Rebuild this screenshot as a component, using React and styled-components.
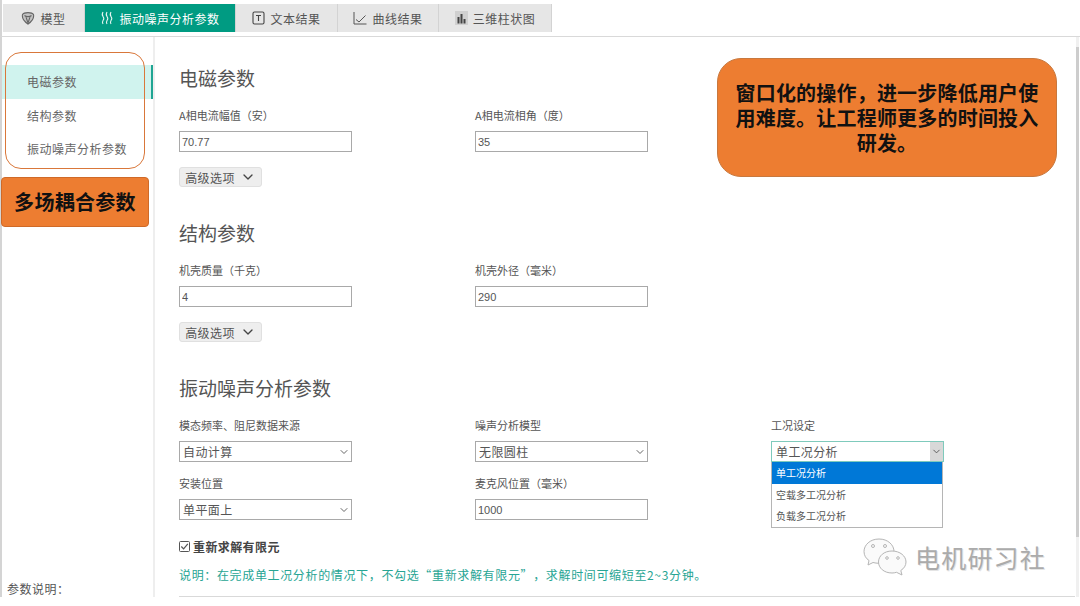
import React from 'react';
import styled, { createGlobalStyle } from 'styled-components';
import { LuChevronDown } from 'react-icons/lu';

const App = () => {
    return <Page>
        <GlobalStyle />
        <TabBar>
            <Tab $width={82} $first><ModelIcon />模型</Tab>
            <Tab $width={151} $active><WaveIcon />振动噪声分析参数</Tab>
            <Tab $width={102}><TextIcon />文本结果</Tab>
            <Tab $width={101}><CurveIcon />曲线结果</Tab>
            <Tab $width={113}><BarsIcon />三维柱状图</Tab>
        </TabBar>
        <Body>
            <Sidebar>
                <MenuFrame />
                <Menu>
                    <MenuItem $active>电磁参数</MenuItem>
                    <MenuItem>结构参数</MenuItem>
                    <MenuItem>振动噪声分析参数</MenuItem>
                </Menu>
                <OrangeTag>多场耦合参数</OrangeTag>
                <ParamNote>参数说明：</ParamNote>
            </Sidebar>
            <Main>
                <Callout>窗口化的操作，进一步降低用户使用难度。让工程师更多的时间投入研发。</Callout>
                <SectionTitle>电磁参数</SectionTitle>
                <FieldRow>
                    <Field label="A相电流幅值（安）"><TextInput readOnly value="70.77" /></Field>
                    <Field label="A相电流相角（度）"><TextInput readOnly value="35" /></Field>
                </FieldRow>
                <AdvancedButton>高级选项<LuChevronDown /></AdvancedButton>

                <SectionTitle>结构参数</SectionTitle>
                <FieldRow>
                    <Field label="机壳质量（千克）"><TextInput readOnly value="4" /></Field>
                    <Field label="机壳外径（毫米）"><TextInput readOnly value="290" /></Field>
                </FieldRow>
                <AdvancedButton>高级选项<LuChevronDown /></AdvancedButton>

                <SectionTitle>振动噪声分析参数</SectionTitle>
                <FieldRow>
                    <Field label="模态频率、阻尼数据来源"><SelectBox>自动计算<LuChevronDown /></SelectBox></Field>
                    <Field label="噪声分析模型"><SelectBox>无限圆柱<LuChevronDown /></SelectBox></Field>
                    <Field label="工况设定">
                        <DropdownWrap>
                            <SelectBox $open>单工况分析<ArrowButton><LuChevronDown /></ArrowButton></SelectBox>
                            <OptionList>
                                <Option $selected>单工况分析</Option>
                                <Option>空载多工况分析</Option>
                                <Option>负载多工况分析</Option>
                            </OptionList>
                        </DropdownWrap>
                    </Field>
                </FieldRow>
                <FieldRow $second>
                    <Field label="安装位置"><SelectBox>单平面上<LuChevronDown /></SelectBox></Field>
                    <Field label="麦克风位置（毫米）"><TextInput readOnly value="1000" /></Field>
                </FieldRow>
                <CheckRow><CheckIcon />重新求解有限元</CheckRow>
                <NoteText>说明：在完成单工况分析的情况下，不勾选“重新求解有限元”，求解时间可缩短至2~3分钟。</NoteText>
                <Divider />
                <Watermark><WechatIcon /><WatermarkText>电机研习社</WatermarkText></Watermark>
            </Main>
            <ScrollTrack><ScrollThumb /></ScrollTrack>
        </Body>
    </Page>
};

export default App;

const Field = ({ label, children }) => <div>
    <FieldLabel>{label}</FieldLabel>
    {children}
</div>;

const ModelIcon = () => <svg width="14" height="14" viewBox="0 0 14 14" fill="none" stroke="#666" strokeWidth="1.1">
    <path d="M1.5 3.5 C3 1 11 1 12.5 3.5 C13 6 11.5 10 7 13 C2.5 10 1 6 1.5 3.5 Z" fill="#c4c4c4" />
    <path d="M3.5 4.5 C5 6 9 6 10.5 4.5 M5 6 L7 12 L9 6" />
</svg>;

const WaveIcon = () => <svg width="14" height="14" viewBox="0 0 14 14" fill="none" stroke="#e4f5f1" strokeWidth="1.1">
    <path d="M3 1 C1.8 3 1.8 4 3 5.5 C4.2 7 4.2 8 3 9.5 C2 11 2.4 12 3 13" />
    <path d="M7 1 C5.8 3 5.8 4 7 5.5 C8.2 7 8.2 8 7 9.5 C6 11 6.4 12 7 13" />
    <path d="M11 1 C9.8 3 9.8 4 11 5.5 C12.2 7 12.2 8 11 9.5 C10 11 10.4 12 11 13" />
</svg>;

const TextIcon = () => <svg width="13" height="14" viewBox="0 0 13 14" fill="none" stroke="#444" strokeWidth="1.1">
    <rect x="1" y="1" width="11" height="12" rx="1.5" />
    <path d="M4 4.5 H9 M6.5 4.5 V10" />
</svg>;

const CurveIcon = () => <svg width="14" height="14" viewBox="0 0 14 14" fill="none" stroke="#555" strokeWidth="1">
    <path d="M1 1 V13 H13.5" />
    <path d="M3 8.5 L6 11 L12.5 4.5" />
</svg>;

const BarsIcon = () => <svg width="13" height="14" viewBox="0 0 13 14">
    <rect width="13" height="14" fill="#d0d0d0" />
    <rect x="2.5" y="6" width="2" height="6.5" fill="#444" />
    <rect x="5.5" y="3" width="2" height="9.5" fill="#444" />
    <rect x="8.5" y="8" width="2" height="4.5" fill="#444" />
</svg>;

const CheckIcon = () => <svg width="11" height="11" viewBox="0 0 11 11" fill="none" stroke="#555">
    <rect x="0.5" y="0.5" width="10" height="10" rx="1" />
    <path d="M2.3 5.5 L4.6 7.8 L8.8 2.8" strokeWidth="1.2" />
</svg>;

const WechatIcon = () => <svg width="44" height="38" viewBox="0 0 44 38" fill="#fafafa" stroke="#b5b5b5" strokeWidth="1">
    <path d="M16 1 C7 1 1 7 1 13.5 C1 17.5 3 20.5 6 22.5 L5 27 L10 24.5 C12 25 14 25.3 16 25.3 C25 25.3 31 19.5 31 13.5 C31 7 25 1 16 1 Z" />
    <path d="M29 13 C21 13 15.5 18 15.5 24 C15.5 30 21 35 29 35 C30.5 35 32 34.8 33.5 34.3 L39 37 L37.8 32.5 C41 30.5 43 27.5 43 24 C43 18 37 13 29 13 Z" />
    <circle cx="10" cy="8" r="1.5" />
    <circle cx="22" cy="8" r="1.5" />
    <circle cx="24" cy="20" r="1.3" />
    <circle cx="35" cy="20" r="1.3" />
</svg>;

const GlobalStyle = createGlobalStyle`
    html, body {
        margin: 0;
        padding: 0;
        background: #fff;
    }
    body {
        font-family: "Noto Sans CJK SC", "Noto Sans", sans-serif;
        color: #555;
    }
`;

const Page = styled.div`
    width: 1080px;
    height: 606px;
    overflow: hidden;
    position: relative;
    background: #fff;
`;

const TabBar = styled.div`
    display: flex;
    height: 37px;
    box-sizing: border-box;
    padding: 4px 0 0 1px;
    border-bottom: 1px solid #d9d9d9;
    border-left: 2px solid #d4d4d4;
`;

const Tab = styled.div`
    width: ${p => p.$width}px;
    height: 28px;
    box-sizing: border-box;
    display: flex;
    align-items: center;
    justify-content: center;
    gap: 5px;
    font-size: 12px;
    letter-spacing: 0.5px;
    color: ${p => p.$active ? '#fff' : '#555'};
    background: ${p => p.$active ? '#009b82' : '#e6e6e6'};
    border-right: 1px solid #d3d3d3;
`;

const Body = styled.div`
    display: flex;
    height: 560px;
    border-left: 2px solid #d4d4d4;
`;

const Sidebar = styled.div`
    width: 153px;
    flex-shrink: 0;
    box-sizing: border-box;
    position: relative;
    border-right: 2px solid #eee;
    padding-top: 28px;
    display: flex;
    flex-direction: column;
`;

const MenuFrame = styled.div`
    position: absolute;
    left: 3px;
    top: 15px;
    width: 138px;
    height: 115px;
    border: 1px solid #d9773a;
    border-radius: 16px;
    pointer-events: none;
`;

const Menu = styled.div`
    display: flex;
    flex-direction: column;
`;

const MenuItem = styled.div`
    height: 33.5px;
    box-sizing: border-box;
    display: flex;
    align-items: center;
    padding-left: 25px;
    font-size: 12px;
    letter-spacing: 0.5px;
    color: #666;
    background: ${p => p.$active ? '#d0f3ee' : 'transparent'};
    border-right: 2px solid ${p => p.$active ? '#1fa593' : 'transparent'};
`;

const OrangeTag = styled.div`
    width: 148px;
    height: 50px;
    margin: 11px 0 0 -1px;
    box-sizing: border-box;
    background: #ed7d31;
    border: 1px solid #cf6a28;
    border-radius: 4px;
    display: flex;
    align-items: center;
    justify-content: center;
    font-size: 20px;
    font-weight: 700;
    letter-spacing: 0.3px;
    color: #111;
`;

const ParamNote = styled.div`
    margin-top: auto;
    padding: 0 0 0 5px;
    font-size: 12px;
    line-height: 16px;
    letter-spacing: 0.5px;
    color: #555;
`;

const Main = styled.div`
    flex: 1;
    position: relative;
    box-sizing: border-box;
    padding: 27px 0 0 24px;
`;

const Callout = styled.div`
    position: absolute;
    left: 562px;
    top: 21px;
    width: 340px;
    height: 119px;
    box-sizing: border-box;
    padding: 0 17px;
    background: #ed7d31;
    border: 1px solid #c8783e;
    border-radius: 24px;
    display: flex;
    align-items: center;
    text-align: center;
    font-size: 20px;
    letter-spacing: 0.2px;
    line-height: 25px;
    font-weight: 700;
    color: #111;
`;

const SectionTitle = styled.h2`
    margin: 0;
    font-size: 19px;
    line-height: 28px;
    font-weight: 400;
    color: #555;
`;

const FieldRow = styled.div`
    display: grid;
    grid-template-columns: 173px 173px 173px;
    column-gap: 123px;
    margin-top: ${p => p.$second ? '13px' : '15px'};
`;

const FieldLabel = styled.div`
    font-size: 11px;
    line-height: 16px;
    margin-bottom: 8px;
    color: #555;
`;

const TextInput = styled.input`
    display: block;
    width: 173px;
    height: 21px;
    box-sizing: border-box;
    padding: 0 2px;
    border: 1px solid #a9a9a9;
    outline: none;
    border-radius: 0;
    font-family: "Liberation Sans", sans-serif;
    font-size: 11px;
    color: #555;
`;

const AdvancedButton = styled.div`
    width: 83px;
    height: 20px;
    margin: 15px 0 32px;
    box-sizing: border-box;
    display: flex;
    align-items: center;
    justify-content: center;
    gap: 5px;
    background: #eee;
    border: 1px solid #e0e0e0;
    border-radius: 3px;
    font-size: 12px;
    letter-spacing: 0.4px;
    color: #555;

    & svg {
        font-size: 16px;
        color: #444;
    }
`;

const SelectBox = styled.div`
    width: 173px;
    height: 21px;
    box-sizing: border-box;
    display: flex;
    align-items: center;
    justify-content: space-between;
    padding: ${p => p.$open ? '0 0 0 4px' : '0 0 0 3px'};
    border: 1px solid ${p => p.$open ? '#7fcabc' : '#a9a9a9'};
    font-size: 12px;
    letter-spacing: 0.4px;
    color: #555;

    & > svg {
        font-size: 12px;
        color: #666;
        margin-right: 1px;
    }
`;

const ArrowButton = styled.span`
    width: 13px;
    height: 19px;
    display: flex;
    align-items: center;
    justify-content: center;
    background: #d8d8d8;
    font-size: 11px;
    color: #555;
`;

const DropdownWrap = styled.div`
    position: relative;
`;

const OptionList = styled.div`
    position: absolute;
    top: 21px;
    left: 0;
    width: 172px;
    box-sizing: border-box;
    background: #fff;
    border: 1px solid #b5b5b5;
    border-top: none;
    z-index: 2;
`;

const Option = styled.div`
    height: 21.5px;
    padding-left: 4px;
    display: flex;
    align-items: center;
    font-size: 10px;
    color: ${p => p.$selected ? '#fff' : '#555'};
    background: ${p => p.$selected ? '#0078d7' : '#fff'};
`;

const CheckRow = styled.div`
    display: flex;
    align-items: center;
    gap: 3px;
    margin-top: 17px;
    height: 18px;
    font-size: 12px;
    font-weight: 700;
    letter-spacing: 0.4px;
    color: #444;
`;

const NoteText = styled.div`
    margin-top: 11px;
    height: 18px;
    line-height: 18px;
    font-size: 12px;
    letter-spacing: 0.65px;
    text-spacing-trim: space-all;
    color: #27a594;
`;

const Divider = styled.div`
    margin-top: 12px;
    margin-right: 1px;
    height: 1px;
    background: #d9d9d9;
`;

const Watermark = styled.div`
    position: absolute;
    left: 708px;
    top: 501px;
    display: flex;
    align-items: center;
    gap: 8px;
`;

const WatermarkText = styled.span`
    font-size: 25px;
    letter-spacing: 1.2px;
    color: #ababab;
    text-shadow: 1px 1px 0 #e4e4e4;
`;

const ScrollTrack = styled.div`
    width: 3px;
    margin-right: 1px;
    flex-shrink: 0;
    background: #f0f0f0;
    padding-top: 10px;
    box-sizing: border-box;
`;

const ScrollThumb = styled.div`
    height: 490px;
    background: #cdcdcd;
`;
